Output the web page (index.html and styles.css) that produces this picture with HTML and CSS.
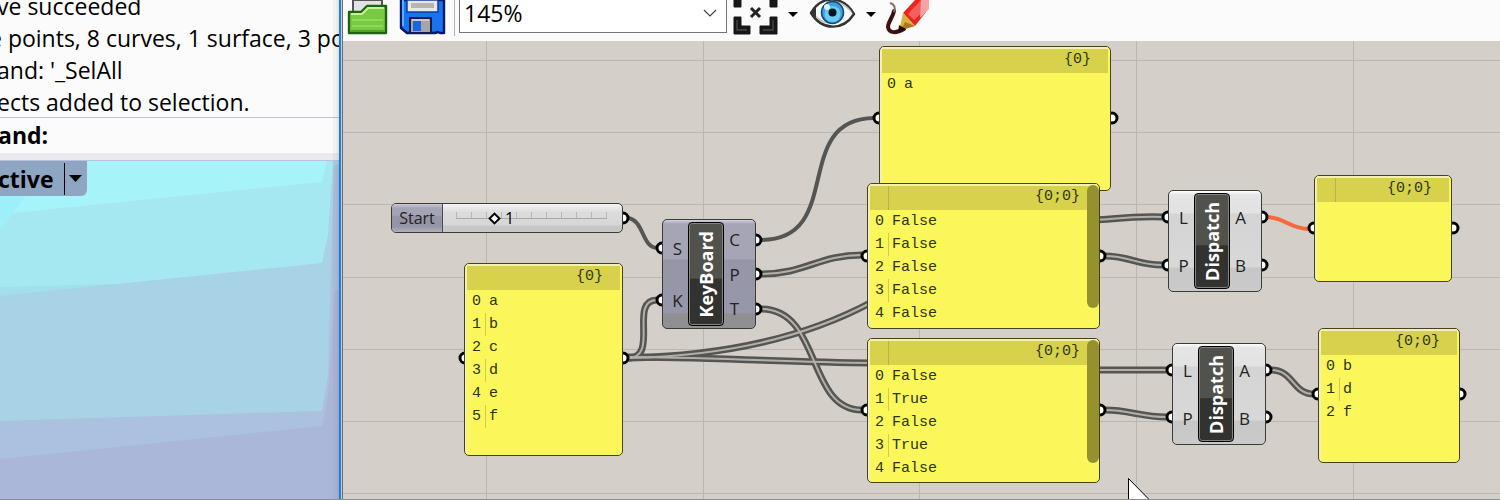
FILE: index.html
```
<!DOCTYPE html>
<html lang="en">
<head>
<meta charset="utf-8">
<title>Keyboard dispatch definition</title>
<link rel="stylesheet" href="styles.css">
</head>
<body>
<div class="app">
  <section class="rhino">
    <div class="history">
      <p>ve succeeded</p>
      <p class="history-cut">e points, 8 curves, 1 surface, 3 po</p>
      <p>and: '_SelAll</p>
      <p>ects added to selection.</p>
    </div>
    <p class="command">and:</p>
    <div class="splitter"></div>
    <div class="viewport">
      <svg class="scene" viewBox="0 161 339 338" preserveAspectRatio="none" aria-hidden="true">
        <rect x="0" y="161" width="339" height="338" fill="#a6f3fa"/>
        <path d="M0 161H60L25 197L0 230Z" fill="#9deff9"/>
        <path d="M0 230L13 213L322 182L327 161H339V499H0Z" fill="#a5e8f2"/>
        <path d="M0 287L125 284L0 298Z" fill="#a2deeb"/>
        <path d="M0 296L322 263L328 235L333 161H339V499H0Z" fill="#a8d2e5"/>
        <path d="M0 421L322 411L328 375L334 165H339V499H0Z" fill="#abc1df"/>
        <path d="M0 459L322 426L328 395L335 290H339V499H0Z" fill="#abb7d9"/>
      </svg>
      <button class="view-title" type="button"><span class="view-name">ctive</span><span class="view-arrow"><svg width="13" height="7" viewBox="0 0 13 7" aria-hidden="true"><path d="M0 0H13L6.5 7Z"/></svg></span></button>
    </div>
  </section>

  <section class="editor">
    <div class="editor-body">
      <div class="toolbar">
        <button class="tool" type="button" aria-label="Open">
          <svg width="48" height="37" viewBox="0 0 48 37">
            <path d="M6 0H35V14H6Z" fill="#e2e2e2" stroke="#555" stroke-width="2"/>
            <path d="M2 12H14L20 6H39V33H2Z" fill="#7ac943" stroke="#1c6410" stroke-width="2.4" stroke-linejoin="round"/>
            <path d="M4 14H15L21 8H37" fill="none" stroke="#c6f09e" stroke-width="2"/>
            <path d="M5 20H36M5 26H36" stroke="#8cd95b" stroke-width="2"/>
            <path d="M4 31H37" stroke="#52a32b" stroke-width="2"/>
          </svg>
        </button>
        <button class="tool" type="button" aria-label="Save">
          <svg width="48" height="37" viewBox="0 0 48 37">
            <path d="M2 0H45V33H41L39 32L36 33H8L2 28Z" fill="#1873ee" stroke="#06186c" stroke-width="2.4" stroke-linejoin="round"/>
            <path d="M4 0V26" stroke="#55b0ff" stroke-width="2"/>
            <path d="M8 0H39V12H8Z" fill="#e8e8e8" stroke="#0c3ca4" stroke-width="1.5"/>
            <path d="M12 3H35V8H12Z" fill="#b8b5b0"/>
            <path d="M11 18H32V33H11Z" fill="#a5a5a5" stroke="#141c50" stroke-width="2"/>
            <path d="M14 21H22V31H14Z" fill="#1766ea"/>
            <path d="M13 20H30" stroke="#d8d8d8" stroke-width="1.5"/>
          </svg>
        </button>
        <span class="tool-rule"></span>
        <div class="zoom">
          <select class="zoom-select" aria-label="Zoom"><option>145%</option></select>
          <svg class="zoom-arrow" width="14" height="8" viewBox="0 0 14 8" aria-hidden="true"><path d="M1 1L7 7L13 1" fill="none" stroke="#444" stroke-width="1.2"/></svg>
        </div>
        <button class="tool" type="button" aria-label="Zoom extents">
          <svg width="48" height="37" viewBox="0 0 48 37">
            <g fill="#171717" stroke="#171717" stroke-linejoin="round">
              <path d="M3 0H10V7H3ZM39 0H46V7H39ZM3 17H10V26H19V34H3ZM39 17H46V34H29V26H39Z"/>
            </g>
            <path d="M6 20V30H16M42 20V30H32" fill="none" stroke="#4a4a4a" stroke-width="1.3"/>
            <path d="M20 8L29 17M29 8L20 17" stroke="#222" stroke-width="3"/>
          </svg>
        </button>
        <button class="tool tool-drop" type="button" aria-label="Zoom options"><svg width="10" height="5" viewBox="0 0 10 5"><path d="M0 0H10L5 5Z"/></svg></button>
        <button class="tool" type="button" aria-label="Preview">
          <svg width="50" height="37" viewBox="0 0 50 37">
            <path d="M4 13C14 -5 36 -5 47 14C36 31 15 31 4 13Z" fill="#f7f9f9" stroke="#333" stroke-width="2.4"/>
            <path d="M6 13C14 21 20 23 26 24C16 24 10 20 6 13ZM46 14C38 6 34 4 30 2C38 3 43 8 46 14Z" fill="#b9b9b9"/>
            <circle cx="25.5" cy="12.500" r="11" fill="#3c9fe0" stroke="#174a70" stroke-width="1.5"/>
            <circle cx="25.5" cy="14" r="8" fill="#68ccf4"/>
            <circle cx="25.5" cy="12.500" r="4" fill="#061522"/>
            <circle cx="20" cy="7" r="3" fill="#d9f3ff"/>
            <path d="M3 12L9 7V18Z" fill="#333"/>
          </svg>
        </button>
        <button class="tool tool-drop" type="button" aria-label="Preview options"><svg width="10" height="5" viewBox="0 0 10 5"><path d="M0 0H10L5 5Z"/></svg></button>
        <button class="tool" type="button" aria-label="Sketch">
          <svg width="48" height="37" viewBox="0 0 48 37">
            <path d="M9 11C8 17 3 22 3 27C4 34 12 33 19 29" fill="none" stroke="#3f1010" stroke-width="4" stroke-linecap="round"/>
            <path d="M5 3C9 4 11 7 9 12" fill="none" stroke="#8a6c6c" stroke-width="2"/>
            <path d="M18 13L30 0H41V12L30 26Z" fill="#e8261f"/>
            <path d="M23 14L36 0H42V8L29 20Z" fill="#f6605c"/>
            <path d="M36 0H44V9L35 18Z" fill="#f6a3a3"/>
            <path d="M18 13L30 26L14 31Z" fill="#d9b23e"/>
            <path d="M20 22L30 26L16 30Z" fill="#a8761e"/>
            <path d="M14 25L21 29L13 33Z" fill="#2d0808"/>
          </svg>
        </button>
      </div>

      <div class="canvas">
        <svg class="wires" width="1157" height="458" viewBox="343 41 1157 458" aria-hidden="true">
          <defs>
            <path id="w1" d="M628 358C660 358 628 300 657 300"/>
            <path id="w2" d="M628 358C720 356 805 338 872 302"/>
            <path id="w3" d="M628 357C700 357 780 362 872 363"/>
            <path id="w4" d="M1095 220C1115 219 1130 216 1163 217"/>
            <path id="w5" d="M1095 370H1167"/>
            <path id="w6" d="M761 274C806 274 818 255 862 255"/>
            <path id="w7" d="M761 309C822 309 806 410 862 410"/>
            <path id="w8" d="M1105 256C1130 256 1136 265 1163 265"/>
            <path id="w9" d="M1105 410C1130 410 1140 417 1167 417"/>
            <path id="w10" d="M1271 370C1294 370 1292 394 1314 394"/>
          </defs>
          <path class="grid" d="M343 60.500H1500M343 132.500H1500M343 204.500H1500M343 277.500H1500M343 349.500H1500M343 421.500H1500M343 493.500H1500M486.500 41V499M703.500 41V499M919.500 41V499M1136.500 41V499M1353.500 41V499"/>
          <g class="wire-outer">
            <use href="#w4"/><use href="#w5"/><use href="#w6"/><use href="#w7"/><use href="#w8"/><use href="#w9"/><use href="#w10"/><use href="#w1"/><use href="#w2"/><use href="#w3"/>
          </g>
          <g class="wire-inner">
            <use href="#w4"/><use href="#w5"/><use href="#w6"/><use href="#w7"/><use href="#w8"/><use href="#w9"/><use href="#w10"/><use href="#w1"/><use href="#w2"/><use href="#w3"/>
          </g>
          <path class="wire" d="M628 218C644 220 642 248 657 248"/>
          <path class="wire" d="M761 240C846 240 790 119 874 118"/>
          <path class="wire wire-empty" d="M1267 217C1284 217 1290 229 1309 229"/>
          <g class="grips">
            <circle cx="623" cy="218" r="5"/><circle cx="465" cy="358" r="5"/><circle cx="623" cy="358" r="5"/>
            <circle cx="662" cy="248" r="5"/><circle cx="662" cy="300" r="5"/>
            <circle cx="756" cy="240" r="5"/><circle cx="756" cy="274" r="5"/><circle cx="756" cy="309" r="5"/>
            <circle cx="879" cy="118" r="5"/><circle cx="1112" cy="118" r="5"/>
            <circle cx="867" cy="256" r="5"/><circle cx="1100" cy="256" r="5"/>
            <circle cx="867" cy="410" r="5"/><circle cx="1100" cy="410" r="5"/>
            <circle cx="1168" cy="217" r="5"/><circle cx="1168" cy="265" r="5"/><circle cx="1262" cy="217" r="5"/><circle cx="1262" cy="265" r="5"/>
            <circle cx="1172" cy="370" r="5"/><circle cx="1172" cy="417" r="5"/><circle cx="1266" cy="370" r="5"/><circle cx="1266" cy="417" r="5"/>
            <circle cx="1314" cy="228" r="5"/><circle cx="1453" cy="228" r="5"/>
            <circle cx="1318" cy="394" r="5"/><circle cx="1460" cy="394" r="5"/>
          </g>
        </svg>

        <div class="node slider">
          <label class="slider-label" for="start">Start</label>
          <div class="slider-track">
            <input class="slider-input" id="start" type="range" min="0" max="100" value="25">
            <output class="slider-value" for="start">1</output>
          </div>
        </div>

        <div class="node panel panel-keys">
          <div class="panel-head">{0}</div>
          <ol class="rows">
            <li><span class="index">0</span><span class="value">a</span></li>
            <li><span class="index">1</span><span class="value">b</span></li>
            <li><span class="index">2</span><span class="value">c</span></li>
            <li><span class="index">3</span><span class="value">d</span></li>
            <li><span class="index">4</span><span class="value">e</span></li>
            <li><span class="index">5</span><span class="value">f</span></li>
          </ol>
        </div>

        <div class="node component component-keyboard">
          <div class="ports"><span>S</span><span>K</span></div>
          <div class="core"><span>KeyBoard</span></div>
          <div class="ports"><span>C</span><span>P</span><span>T</span></div>
        </div>

        <div class="node panel panel-char">
          <div class="panel-head">{0}</div>
          <ol class="rows">
            <li><span class="index">0</span><span class="value">a</span></li>
          </ol>
        </div>

        <div class="node panel panel-pressed">
          <div class="panel-head panel-head-ruled">{0;0}</div>
          <ol class="rows">
            <li><span class="index">0</span><span class="value">False</span></li>
            <li><span class="index">1</span><span class="value">False</span></li>
            <li><span class="index">2</span><span class="value">False</span></li>
            <li><span class="index">3</span><span class="value">False</span></li>
            <li><span class="index">4</span><span class="value">False</span></li>
          </ol>
          <div class="scrollbar"></div>
        </div>

        <div class="node panel panel-toggled">
          <div class="panel-head panel-head-ruled">{0;0}</div>
          <ol class="rows">
            <li><span class="index">0</span><span class="value">False</span></li>
            <li><span class="index">1</span><span class="value">True</span></li>
            <li><span class="index">2</span><span class="value">False</span></li>
            <li><span class="index">3</span><span class="value">True</span></li>
            <li><span class="index">4</span><span class="value">False</span></li>
          </ol>
          <div class="scrollbar"></div>
        </div>

        <div class="node component dispatch dispatch-one">
          <div class="ports"><span>L</span><span>P</span></div>
          <div class="core"><span>Dispatch</span></div>
          <div class="ports"><span>A</span><span>B</span></div>
        </div>

        <div class="node component dispatch dispatch-two">
          <div class="ports"><span>L</span><span>P</span></div>
          <div class="core"><span>Dispatch</span></div>
          <div class="ports"><span>A</span><span>B</span></div>
        </div>

        <div class="node panel panel-empty">
          <div class="panel-head panel-head-ruled">{0;0}</div>
        </div>

        <div class="node panel panel-result">
          <div class="panel-head">{0;0}</div>
          <ol class="rows">
            <li><span class="index">0</span><span class="value">b</span></li>
            <li><span class="index">1</span><span class="value">d</span></li>
            <li><span class="index">2</span><span class="value">f</span></li>
          </ol>
        </div>

        <svg class="pointer" width="24" height="36" viewBox="0 0 24 36" aria-hidden="true"><path d="M0.500 0.500V32L8 25L13 35L17 33L12 23H22.500Z" fill="#fff" stroke="#000"/></svg>
      </div>
    </div>
  </section>
</div>
</body>
</html>
```

FILE: styles.css
```
* {
  box-sizing: border-box;
}

body {
  margin: 0;
  font-family: "Open Sans", "Noto Sans", sans-serif;
  color: #000;
}

p,
ol {
  margin: 0;
  padding: 0;
}

button {
  margin: 0;
  padding: 0;
  border: 0;
  background: none;
  font: inherit;
  color: inherit;
}

.app {
  display: flex;
  min-height: 100vh;
  border-bottom: 1px solid #8d8d8d;
  overflow: hidden;
}

/* Modeller: command history and viewport */

.rhino {
  position: relative;
  display: flex;
  flex: 0 0 339px;
  flex-direction: column;
  overflow: hidden;
  background: #fbfbfb;
}

.rhino::after {
  content: "";
  position: absolute;
  top: 0;
  right: 0;
  bottom: 0;
  width: 6px;
  background: linear-gradient(to right, rgba(90, 90, 90, 0.06) 50%, rgba(90, 90, 90, 0.2));
}

.history {
  display: flex;
  flex-direction: column;
  justify-content: flex-end;
  height: 118px;
  overflow: hidden;
  border-bottom: 1px solid #b9c1dc;
  font-size: 23px;
  line-height: 32px;
  white-space: nowrap;
}

.history p {
  margin: 0 0 0 -3px;
  position: relative;
  top: 1px;
}

.history .history-cut {
  margin-left: -11px;
}

.command {
  margin-left: -2px;
  font-size: 23px;
  font-weight: 700;
  line-height: 35px;
}

.splitter {
  height: 8px;
  border-bottom: 1px solid #b9c1dc;
  background: #ebebef;
}

.viewport {
  position: relative;
  flex: 1;
}

.scene {
  position: absolute;
  width: 100%;
  height: 100%;
}

.view-title {
  position: relative;
  display: flex;
  align-items: center;
  height: 35px;
  margin-left: -2px;
  padding-right: 5px;
  border-radius: 0 0 6px 0;
  background: #8ea6c2;
  font-size: 23px;
  font-weight: 700;
}

.view-name {
  width: 66px;
  text-align: left;
}

.view-arrow {
  display: flex;
  align-items: center;
  height: 32px;
  padding-left: 4px;
  border-left: 1px solid #000;
}

/* Graph editor */

.editor {
  flex: 1;
  display: flex;
  min-width: 0;
  padding-left: 1px;
  border-left: 2px solid #1a82d6;
  background: #c5ccd2;
}

.editor-body {
  display: flex;
  flex: 1;
  flex-direction: column;
  min-width: 0;
  border-left: 1px solid #6d6d6d;
}

.toolbar {
  display: flex;
  gap: 4px;
  height: 41px;
  padding-left: 4px;
  background: #fbfbfb;
}

.tool {
  height: 37px;
}

.tool svg {
  display: block;
}

.tool-drop {
  display: flex;
  align-items: center;
  justify-content: center;
  width: 20px;
  height: 29px;
}

.tool-rule {
  width: 1px;
  height: 36px;
  margin-left: 3px;
  background: #b5b3a8;
}

.zoom {
  position: relative;
  width: 268px;
  height: 33px;
}

.zoom-select {
  width: 100%;
  height: 100%;
  padding: 0 4px 6px;
  border: 1px solid #767676;
  border-top: 0;
  border-radius: 0;
  appearance: none;
  background: #fff;
  font: 23px/26px "Open Sans", "Noto Sans", sans-serif;
  color: #000;
}

.zoom-arrow {
  position: absolute;
  top: 9px;
  right: 10px;
}

.canvas {
  position: relative;
  flex: 1;
  overflow: hidden;
  background: #d4cfc8;
}

.wires {
  position: absolute;
  top: 0;
  left: 0;
}

.grid {
  stroke: #bbb7b0;
}

.wire,
.wire-outer,
.wire-inner {
  fill: none;
}

.wire {
  stroke: #555653;
  stroke-width: 4;
}

.wire-empty {
  stroke: #f7683a;
}

.wire-outer {
  stroke: #555653;
  stroke-width: 7;
}

.wire-inner {
  stroke: #b4b0a9;
  stroke-width: 2;
}

.grips {
  fill: #fff;
  stroke: #000;
  stroke-width: 3;
}

.node {
  position: absolute;
  overflow: hidden;
  border: 1px solid #3c3c36;
  border-radius: 5px;
}

/* Number slider */

.slider {
  top: 162px;
  left: 48px;
  display: flex;
  width: 232px;
  height: 30px;
  background: linear-gradient(#f4f4f4 0, #dcdcdc 30%, #d6d6d6 75%, #c6c6c6 80%, #c8c8c8 100%);
}

.slider-label {
  width: 53px;
  border-right: 1px solid #4c4c4c;
  background: linear-gradient(#c8c8d8 0, #a5a4b5 15%, #a5a4b5 40%, #9595a6 45%, #9595a6 80%, #b0b0bc 100%);
  font-size: 16px;
  line-height: 28px;
  text-align: center;
  color: #222;
}

.slider-track {
  position: relative;
  flex: 1;
  padding: 8px 10px 0 9px;
}

.slider-input {
  display: block;
  width: 160px;
  height: 12px;
  margin: 0;
  appearance: none;
  background:
    linear-gradient(#aba9a2, #aba9a2) 4px 6px / 151px 1px no-repeat,
    repeating-linear-gradient(to right, #b8b6af 0 1px, transparent 1px 15px) 4px 0 / 151px 6px no-repeat;
}

.slider-input::-webkit-slider-thumb {
  width: 9px;
  height: 9px;
  appearance: none;
  border: 2px solid #000;
  background: #fff;
  transform: rotate(45deg);
}

.slider-value {
  position: absolute;
  top: 0;
  left: 59px;
  padding: 0 3px;
  font-size: 16px;
  line-height: 28px;
}

/* Data panels */

.panel {
  border-color: #44441c;
  background: #fbf65a;
  box-shadow: inset 1px 1px 0 1px #f3f0b4;
  font-family: "Liberation Mono", monospace;
  font-size: 15px;
  color: #2c3512;
}

.panel-head {
  height: 26px;
  margin: 0 2px;
  padding-right: 17px;
  border-top: 2px solid #f3f0b4;
  background: #d7d14c;
  line-height: 21px;
  text-align: right;
}

.panel-head-ruled {
  background: linear-gradient(#b8b347, #b8b347) 18px 0 / 1px 100% no-repeat #d7d14c;
}

.rows {
  list-style: none;
}

.rows li {
  display: flex;
  height: 23px;
  padding-left: 7px;
  line-height: 24px;
}

.index {
  width: 14px;
  border-right: 1px solid transparent;
}

.rows li:nth-child(even) .index {
  border-color: #d0cb48;
}

.value {
  padding-left: 3px;
}

.scrollbar {
  position: absolute;
  top: 1px;
  right: 0;
  width: 12px;
  height: 123px;
  border-radius: 6px;
  background: #96912f;
}

.panel-keys {
  top: 222px;
  left: 121px;
  width: 159px;
  height: 193px;
}

.panel-char {
  top: 5px;
  left: 536px;
  width: 232px;
  height: 145px;
}

.panel-pressed {
  top: 142px;
  left: 524px;
  width: 233px;
  height: 146px;
}

.panel-toggled {
  top: 297px;
  left: 524px;
  width: 233px;
  height: 145px;
}

.panel-empty {
  top: 134px;
  left: 971px;
  width: 138px;
  height: 107px;
}

.panel-result {
  top: 287px;
  left: 975px;
  width: 142px;
  height: 135px;
}

/* Components */

.component {
  display: flex;
  padding: 2px 0;
  font-size: 17px;
}

.component-keyboard {
  top: 178px;
  left: 319px;
  width: 94px;
  height: 110px;
  background: linear-gradient(#d4d2e0 0, #a6a5b6 4px, #a6a5b6 36%, #9696a8 37%, #9797aa 86%, #909092 87%);
}

.dispatch {
  width: 94px;
  height: 102px;
  background: linear-gradient(#fff 0, #e5e5e5 4px, #e2e2e2 22%, #d4d4d4 23%, #d8d8d8 76%, #c7c7c7 77%, #cacaca 100%);
}

.dispatch-one {
  top: 149px;
  left: 825px;
}

.dispatch-two {
  top: 302px;
  left: 829px;
}

.ports {
  display: flex;
  flex: 1;
  flex-direction: column;
  color: #222;
}

.ports span {
  display: flex;
  flex: 1;
  align-items: center;
  justify-content: center;
}

.ports:first-child {
  padding-left: 4px;
}

.ports:last-child {
  padding-right: 10px;
}

.core {
  display: flex;
  flex: 0 0 36px;
  align-items: center;
  justify-content: center;
  border: 1px solid #000;
  border-radius: 4px;
  background: linear-gradient(#51524c 54%, #323230 55%);
  box-shadow: inset 0 0 0 1px #85857f;
  font-size: 18px;
  font-weight: 700;
  color: #fff;
}

.core span {
  writing-mode: vertical-rl;
  transform: rotate(180deg);
  line-height: 30px;
}

.pointer {
  position: absolute;
  top: 437px;
  left: 785px;
}
```
